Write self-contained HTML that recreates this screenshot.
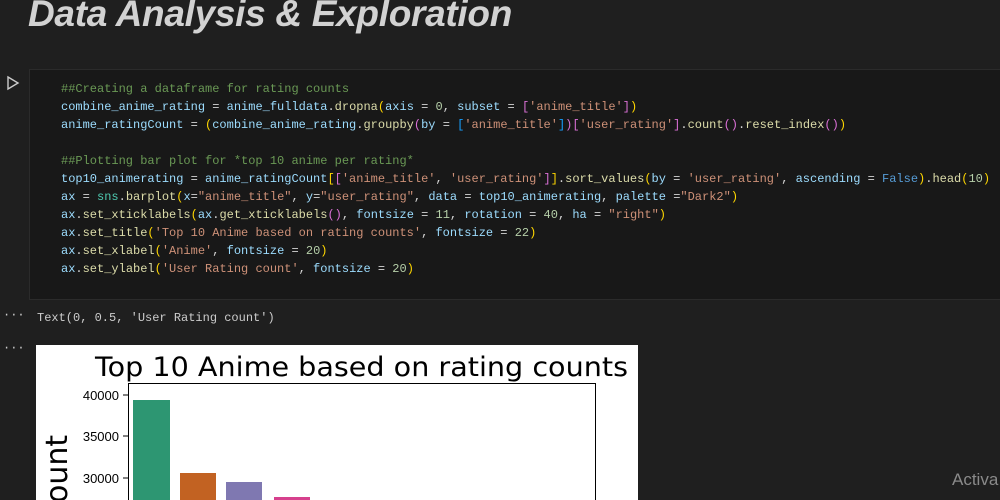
<!DOCTYPE html>
<html><head><style>
body{margin:0;width:1000px;height:500px;overflow:hidden;background:#1f1f1f;position:relative;font-family:"Liberation Mono",monospace}
.t{position:absolute;left:28px;top:-7px;font:italic bold 37px "Liberation Sans",sans-serif;color:#d2d2d2;letter-spacing:-0.3px}
.cell{position:absolute;left:29px;top:69px;width:990px;height:231px;background:#181818;border:1px solid #2b2b2b;box-sizing:border-box}
pre{position:absolute;left:61px;top:80px;margin:0;font:12px/18px "Liberation Mono",monospace;color:#9cdcfe}
.c{color:#6a9955}.s{color:#ce9178}.y{color:#ffd700}.p{color:#da70d6}.b{color:#179fff}.f{color:#dcdcaa}.k{color:#569cd6}.n{color:#b5cea8}.w{color:#d4d4d4}.g{color:#4ec9b0}
.dots{position:absolute;left:3px;color:#ccc;font-size:12px}
.out{position:absolute;left:37px;top:311px;font-size:12px;color:#ccc}
.plot{position:absolute;left:36px;top:345px;width:602px;height:155px;background:#fff;overflow:hidden}
</style></head><body>
<div class="t">Data Analysis &amp; Exploration</div>
<svg style="position:absolute;left:6px;top:75px" width="14" height="16"><path d="M2 2 L12 8 L2 14 Z" fill="none" stroke="#ccc" stroke-width="1.4"/></svg>
<div class="cell"></div>
<pre><span class="c">##Creating a dataframe for rating counts</span>
combine_anime_rating <span class="w">=</span> anime_fulldata<span class="w">.</span><span class="f">dropna</span><span class="y">(</span>axis <span class="w">=</span> <span class="n">0</span><span class="w">,</span> subset <span class="w">=</span> <span class="p">[</span><span class="s">'anime_title'</span><span class="p">]</span><span class="y">)</span>
anime_ratingCount <span class="w">=</span> <span class="y">(</span>combine_anime_rating<span class="w">.</span><span class="f">groupby</span><span class="p">(</span>by <span class="w">=</span> <span class="b">[</span><span class="s">'anime_title'</span><span class="b">]</span><span class="p">)</span><span class="p">[</span><span class="s">'user_rating'</span><span class="p">]</span><span class="w">.</span><span class="f">count</span><span class="p">()</span><span class="w">.</span><span class="f">reset_index</span><span class="p">()</span><span class="y">)</span>

<span class="c">##Plotting bar plot for *top 10 anime per rating*</span>
top10_animerating <span class="w">=</span> anime_ratingCount<span class="y">[</span><span class="p">[</span><span class="s">'anime_title'</span><span class="w">,</span> <span class="s">'user_rating'</span><span class="p">]</span><span class="y">]</span><span class="w">.</span><span class="f">sort_values</span><span class="y">(</span>by <span class="w">=</span> <span class="s">'user_rating'</span><span class="w">,</span> ascending <span class="w">=</span> <span class="k">False</span><span class="y">)</span><span class="w">.</span><span class="f">head</span><span class="y">(</span><span class="n">10</span><span class="y">)</span>
ax <span class="w">=</span> <span class="g">sns</span><span class="w">.</span><span class="f">barplot</span><span class="y">(</span>x<span class="w">=</span><span class="s">"anime_title"</span><span class="w">,</span> y<span class="w">=</span><span class="s">"user_rating"</span><span class="w">,</span> data <span class="w">=</span> top10_animerating<span class="w">,</span> palette <span class="w">=</span><span class="s">"Dark2"</span><span class="y">)</span>
ax<span class="w">.</span><span class="f">set_xticklabels</span><span class="y">(</span>ax<span class="w">.</span><span class="f">get_xticklabels</span><span class="p">()</span><span class="w">,</span> fontsize <span class="w">=</span> <span class="n">11</span><span class="w">,</span> rotation <span class="w">=</span> <span class="n">40</span><span class="w">,</span> ha <span class="w">=</span> <span class="s">"right"</span><span class="y">)</span>
ax<span class="w">.</span><span class="f">set_title</span><span class="y">(</span><span class="s">'Top 10 Anime based on rating counts'</span><span class="w">,</span> fontsize <span class="w">=</span> <span class="n">22</span><span class="y">)</span>
ax<span class="w">.</span><span class="f">set_xlabel</span><span class="y">(</span><span class="s">'Anime'</span><span class="w">,</span> fontsize <span class="w">=</span> <span class="n">20</span><span class="y">)</span>
ax<span class="w">.</span><span class="f">set_ylabel</span><span class="y">(</span><span class="s">'User Rating count'</span><span class="w">,</span> fontsize <span class="w">=</span> <span class="n">20</span><span class="y">)</span></pre>
<div class="dots" style="top:308px">···</div>
<div class="dots" style="top:341px">···</div>
<div class="out">Text(0, 0.5, 'User Rating count')</div>
<div class="plot">
<svg width="602" height="155" style="font-family:'DejaVu Sans',sans-serif">
<text x="59" y="31" font-size="27" fill="#000" textLength="533" lengthAdjust="spacingAndGlyphs">Top 10 Anime based on rating counts</text>
<rect x="92.5" y="38.5" width="467" height="130" fill="none" stroke="#000" stroke-width="1"/>
<g font-size="13" fill="#000" text-anchor="end" font-family="Liberation Sans,sans-serif">
<text x="83" y="55">40000</text><text x="83" y="96">35000</text><text x="83" y="138">30000</text></g>
<g stroke="#000"><line x1="87" y1="50" x2="92" y2="50"/><line x1="87" y1="91" x2="92" y2="91"/><line x1="87" y1="133" x2="92" y2="133"/></g>
<rect x="97" y="55" width="37" height="110" fill="#2d9672"/>
<rect x="144" y="128" width="36" height="40" fill="#c26222"/>
<rect x="190" y="137" width="36" height="30" fill="#7f78b1"/>
<rect x="238" y="152" width="36" height="20" fill="#d6408d"/>
<text transform="translate(31,158) rotate(-90)" font-size="30" fill="#000">ount</text>
</svg></div>
<div style="position:absolute;left:952px;top:470px;font:17px 'Liberation Sans',sans-serif;color:#8a8a8a">Activa</div>
</body></html>
